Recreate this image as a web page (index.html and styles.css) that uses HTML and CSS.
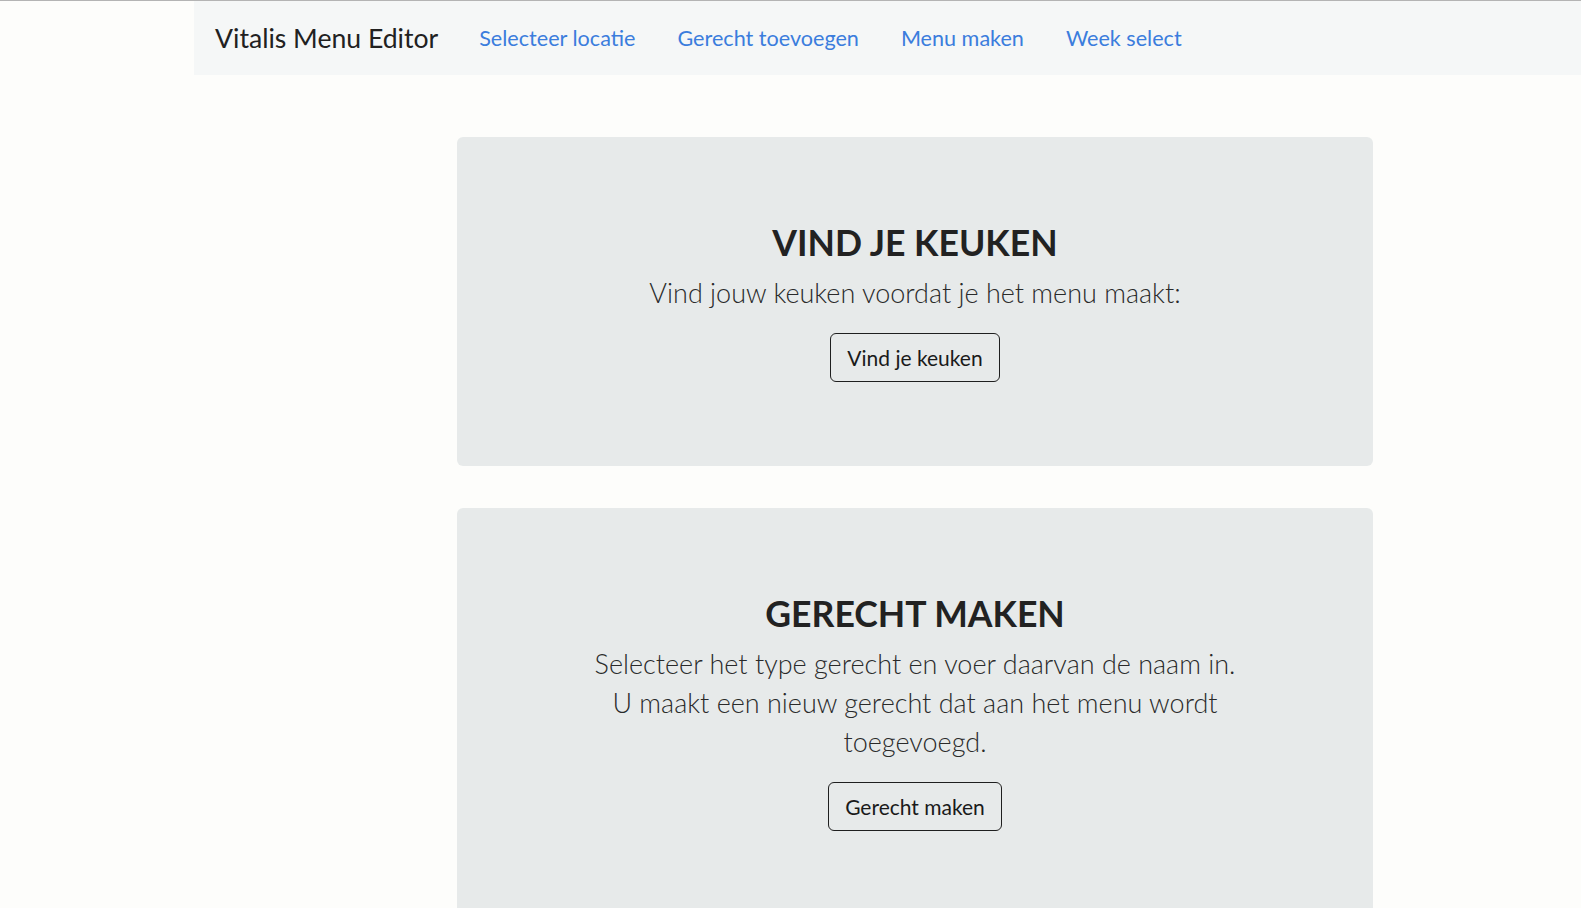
FILE: index.html
```html
<!DOCTYPE html>
<html lang="nl">
<head>
<meta charset="utf-8">
<title>Vitalis Menu Editor</title>
<link rel="stylesheet" href="styles.css">
</head>
<body>
<div class="page">
  <nav class="navbar">
    <a class="brand" href="#">Vitalis Menu Editor</a>
    <ul class="nav-links">
      <li><a href="#">Selecteer locatie</a></li>
      <li><a href="#">Gerecht toevoegen</a></li>
      <li><a href="#">Menu maken</a></li>
      <li><a href="#">Week select</a></li>
    </ul>
  </nav>
  <main class="content">
    <section class="card">
      <h1 class="card-title">VIND JE KEUKEN</h1>
      <p class="lead">Vind jouw keuken voordat je het menu maakt:</p>
      <button class="btn" type="button">Vind je keuken</button>
    </section>
    <section class="card">
      <h1 class="card-title">GERECHT MAKEN</h1>
      <p class="lead">Selecteer het type gerecht en voer daarvan de naam in. U maakt een nieuw gerecht dat aan het menu wordt toegevoegd.</p>
      <button class="btn" type="button">Gerecht maken</button>
    </section>
  </main>
</div>
</body>
</html>
```
FILE: styles.css
```css
* { box-sizing: border-box; }
html, body { margin: 0; padding: 0; }
body {
  background: #fdfdfb;
  border-top: 1px solid #b4b4b4;
  font-family: "Lato", "Open Sans", sans-serif;
  color: #212529;
  overflow: hidden;
}
.page {
  padding-left: 194px;
}
.navbar {
  display: flex;
  align-items: center;
  height: 74px;
  background: #f5f7f7;
  padding-left: 21px;
}
.brand {
  font-size: 26.6px;
  color: #212121;
  text-decoration: none;
  margin-right: 41px;
}
.nav-links {
  display: flex;
  gap: 42px;
  list-style: none;
  margin: 0;
  padding: 0;
}
.nav-links a {
  font-size: 21.6px;
  color: #3b7ddd;
  text-decoration: none;
}
.content {
  padding: 62px 0 0 263px;
  display: flex;
  flex-direction: column;
  gap: 42px;
}
.card {
  width: 916px;
  background: #e7eaea;
  border-radius: 6px;
  padding: 84px 32px;
  display: flex;
  flex-direction: column;
  align-items: center;
  text-align: center;
}
.card-title {
  margin: 0 0 9px;
  font-size: 35.6px;
  line-height: 43px;
  font-weight: 700;
  color: #222;
}
.lead {
  margin: 0 0 21px;
  font-size: 27px;
  line-height: 39px;
  font-weight: 300;
  color: #2a2a2a;
  max-width: 664px;
}
.btn {
  font-family: inherit;
  font-size: 21px;
  line-height: 31px;
  padding: 8px 16px;
  background: transparent;
  border: 1px solid #1f1f1f;
  border-radius: 6px;
  color: #1a1a1a;
}
```
